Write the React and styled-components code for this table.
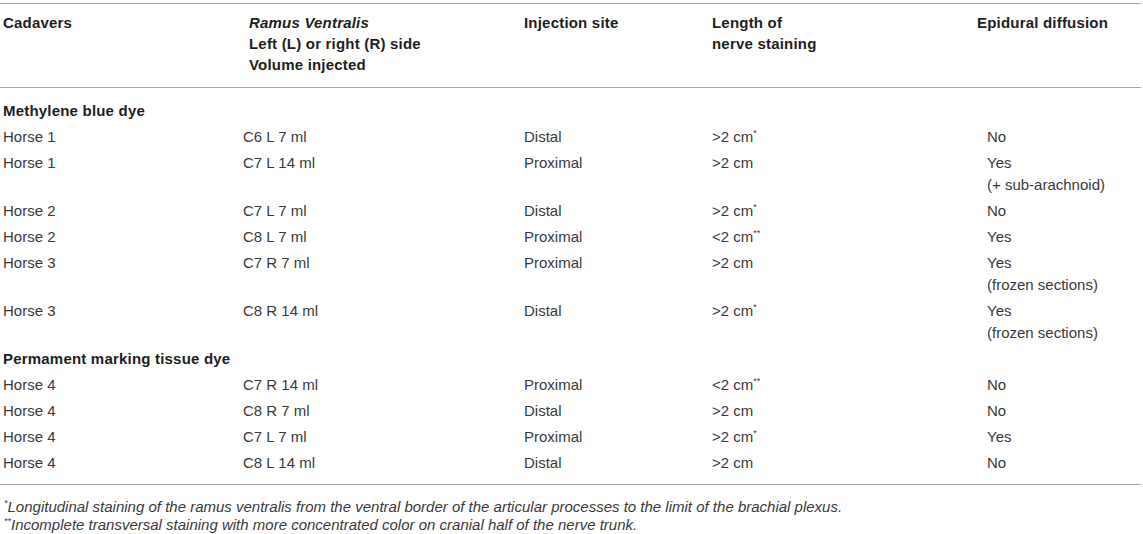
import styled, { createGlobalStyle } from "styled-components";

const GlobalStyle = createGlobalStyle`
  body {
    margin: 0;
    background: #ffffff;
    font-family: "Liberation Sans", Arial, sans-serif;
  }
`;

const Wrap = styled.div`
  width: 1141px;
  padding-top: 3px;
`;

const Table = styled.table`
  width: 1141px;
  border-collapse: collapse;
  table-layout: fixed;
  border-top: 1px solid #a9a9a9;
  border-bottom: 1px solid #a9a9a9;
`;

const Head = styled.thead`
  border-bottom: 1px solid #a9a9a9;
`;

const Th = styled.th`
  text-align: left;
  vertical-align: top;
  font-size: 15px;
  font-weight: bold;
  letter-spacing: 0.2px;
  line-height: 21px;
  color: #1e1e1e;
  padding: 8px 0 12px ${(p) => p.$indent || 3}px;
`;

const SectionCell = styled.td`
  font-size: 15px;
  font-weight: bold;
  letter-spacing: 0.2px;
  line-height: 22px;
  color: #1e1e1e;
  padding: ${(p) => p.$top}px 0 ${(p) => p.$bottom}px 3px;
`;

const Td = styled.td`
  vertical-align: top;
  font-size: 15px;
  line-height: 22px;
  color: #3a3a3a;
  padding: 2px 0 ${(p) => p.$bottom || 2}px ${(p) => p.$indent || 3}px;
`;

const Sup = styled.sup`
  font-size: 9px;
  line-height: 0;
  vertical-align: 6px;
`;

const Notes = styled.div`
  padding: 13px 0 0 4px;
  font-size: 15px;
  font-style: italic;
  line-height: 18px;
  color: #3a3a3a;
`;

const Note = styled.p`
  margin: 0;
`;

const groups = [
  {
    title: "Methylene blue dye",
    top: 12,
    rows: [
      ["Horse 1", "C6 L 7 ml", "Distal", ">2 cm", "*", ["No"]],
      ["Horse 1", "C7 L 14 ml", "Proximal", ">2 cm", "", ["Yes", "(+ sub-arachnoid)"]],
      ["Horse 2", "C7 L 7 ml", "Distal", ">2 cm", "*", ["No"]],
      ["Horse 2", "C8 L 7 ml", "Proximal", "<2 cm", "**", ["Yes"]],
      ["Horse 3", "C7 R 7 ml", "Proximal", ">2 cm", "", ["Yes", "(frozen sections)"]],
      ["Horse 3", "C8 R 14 ml", "Distal", ">2 cm", "*", ["Yes", "(frozen sections)"]],
    ],
  },
  {
    title: "Permament marking tissue dye",
    top: 2,
    rows: [
      ["Horse 4", "C7 R 14 ml", "Proximal", "<2 cm", "**", ["No"]],
      ["Horse 4", "C8 R 7 ml", "Distal", ">2 cm", "", ["No"]],
      ["Horse 4", "C7 L 7 ml", "Proximal", ">2 cm", "*", ["Yes"]],
      ["Horse 4", "C8 L 14 ml", "Distal", ">2 cm", "", ["No"]],
    ],
  },
];

export default function App() {
  return (
    <Wrap>
      <GlobalStyle />
      <Table>
        <colgroup>
          <col style={{ width: 240 }} />
          <col style={{ width: 281 }} />
          <col style={{ width: 188 }} />
          <col style={{ width: 265 }} />
          <col style={{ width: 167 }} />
        </colgroup>
        <Head>
          <tr>
            <Th>Cadavers</Th>
            <Th $indent={9}>
              <i>Ramus Ventralis</i>
              <br />
              Left (L) or right (R) side
              <br />
              Volume injected
            </Th>
            <Th>Injection site</Th>
            <Th>
              Length of
              <br />
              nerve staining
            </Th>
            <Th>Epidural diffusion</Th>
          </tr>
        </Head>
        {groups.map((g, gi) => (
          <tbody key={g.title}>
            <tr>
              <SectionCell colSpan={5} $top={g.top} $bottom={2}>
                {g.title}
              </SectionCell>
            </tr>
            {g.rows.map((r, i) => {
              const last = gi === groups.length - 1 && i === g.rows.length - 1;
              const bottom = last ? 10 : 2;
              return (
                <tr key={i}>
                  <Td $bottom={bottom}>{r[0]}</Td>
                  <Td $bottom={bottom}>{r[1]}</Td>
                  <Td $bottom={bottom}>{r[2]}</Td>
                  <Td $bottom={bottom}>
                    {r[3]}
                    {r[4] && <Sup>{r[4]}</Sup>}
                  </Td>
                  <Td $bottom={bottom} $indent={13}>
                    {r[5].map((line, li) => (
                      <div key={li}>{line}</div>
                    ))}
                  </Td>
                </tr>
              );
            })}
          </tbody>
        ))}
      </Table>
      <Notes>
        <Note>
          <Sup>*</Sup>Longitudinal staining of the ramus ventralis from the ventral border of the
          articular processes to the limit of the brachial plexus.
        </Note>
        <Note>
          <Sup>**</Sup>Incomplete transversal staining with more concentrated color on cranial half
          of the nerve trunk.
        </Note>
      </Notes>
    </Wrap>
  );
}
